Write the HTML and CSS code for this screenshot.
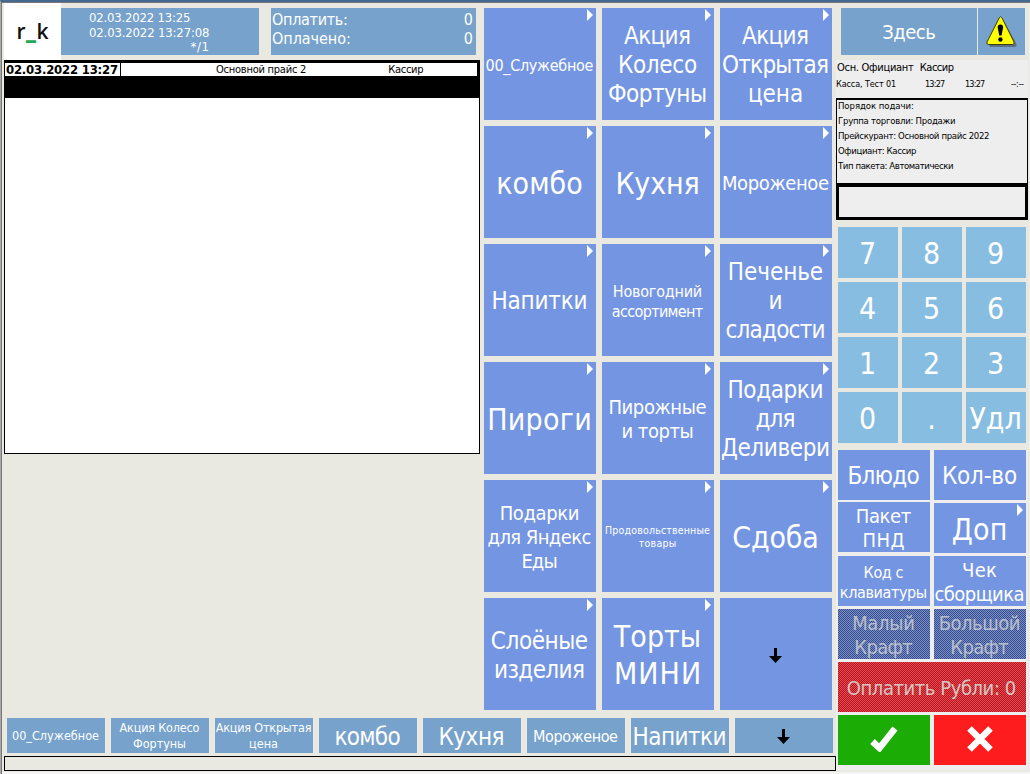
FILE: index.html
```html
<!DOCTYPE html>
<html lang="ru">
<head>
<meta charset="utf-8">
<title>r_k</title>
<link rel="stylesheet" href="styles.css">
</head>
<body>
<div class="window">
  <main class="main">
    <div class="top">
      <section class="order">
        <header class="order-head">
          <div class="logo"><span>r<i>_</i>k</span></div>
          <div class="panel dates">
            <span data-w="101">02.03.2022 13:25</span>
            <span data-w="120">02.03.2022 13:27:08</span>
            <span class="seat" data-w="18">*/1</span>
          </div>
          <div class="panel totals">
            <div><span data-w="75">Оплатить:</span><span>0</span></div>
            <div><span data-w="78">Оплачено:</span><span>0</span></div>
          </div>
        </header>
        <div class="receipt">
          <div class="receipt-row">
            <b><span data-w="112">02.03.2022 13:27</span></b>
            <span class="price" data-w="90">Основной прайс 2</span>
            <span class="cashier" data-w="35">Кассир</span>
          </div>
          <div class="receipt-selected"></div>
        </div>
      </section>
      <section class="categories">
        <button class="tile more s16"><span data-w="108">00_Служебное</span></button>
        <button class="tile more s24"><span data-w="66">Акция</span><span data-w="77">Колесо</span><span data-w="97">Фортуны</span></button>
        <button class="tile more s24"><span data-w="66">Акция</span><span data-w="105">Открытая</span><span data-w="53">цена</span></button>
        <button class="tile more s30"><span data-w="84">комбо</span></button>
        <button class="tile more s30"><span data-w="80">Кухня</span></button>
        <button class="tile more s20"><span data-w="106">Мороженое</span></button>
        <button class="tile more s24"><span data-w="93">Напитки</span></button>
        <button class="tile more s16"><span data-w="88">Новогодний</span><span data-w="91">ассортимент</span></button>
        <button class="tile more s24"><span data-w="93">Печенье</span><span>и</span><span data-w="98">сладости</span></button>
        <button class="tile more s30"><span data-w="101">Пироги</span></button>
        <button class="tile more s20"><span data-w="97">Пирожные</span><span data-w="70">и торты</span></button>
        <button class="tile more s24"><span data-w="93">Подарки</span><span data-w="38">для</span><span data-w="107">Деливери</span></button>
        <button class="tile more s20"><span data-w="78">Подарки</span><span data-w="103">для Яндекс</span><span data-w="34">Еды</span></button>
        <button class="tile more s11"><span data-w="105">Продовольственные</span><span data-w="37">товары</span></button>
        <button class="tile more s30"><span data-w="84">Сдоба</span></button>
        <button class="tile more s24 low"><span data-w="96">Слоёные</span><span data-w="89">изделия</span></button>
        <button class="tile more s30"><span data-w="86">Торты</span><span data-w="83">МИНИ</span></button>
        <button class="tile"><svg class="arrow" width="13" height="15" viewBox="0 0 13 15"><path d="M5 0h3v8h5L6.500 15 0 8h5z"/></svg></button>
      </section>
    </div>
    <nav class="quick">
      <button class="tile s13"><span data-w="87">00_Служебное</span></button>
      <button class="tile s13"><span data-w="80">Акция Колесо</span><span data-w="52">Фортуны</span></button>
      <button class="tile s13"><span data-w="95">Акция Открытая</span><span data-w="27">цена</span></button>
      <button class="tile s24"><span data-w="65">комбо</span></button>
      <button class="tile s24"><span data-w="63">Кухня</span></button>
      <button class="tile s16"><span data-w="84">Мороженое</span></button>
      <button class="tile s24"><span data-w="91">Напитки</span></button>
      <button class="tile"><svg class="arrow" width="13" height="15" viewBox="0 0 13 15"><path d="M5 0h3v8h5L6.500 15 0 8h5z"/></svg></button>
    </nav>
    <div class="status"></div>
  </main>
  <aside class="side">
    <div class="mode">
      <button class="panel place"><span data-w="52">Здесь</span></button>
      <button class="panel warn">
        <svg width="32" height="32" viewBox="0 0 32 32">
          <path d="M17 3.500 30.500 28Q31 31 28.500 31H5q-2 0-2-2z" fill="#5d6f84"/>
          <path d="M13.500 1.500q1-1.500 2.300 0L28 26q.7 2.500-1.700 2.500H2.500Q.3 28.500 1 26z" fill="#ff0" stroke="#3c3c10" stroke-width="1"/>
          <path d="M11.700 11.500q0-3 2.700-3t2.700 3l-1.500 8h-2.400z"/><circle cx="14.400" cy="23.500" r="2.200"/>
        </svg>
      </button>
    </div>
    <div class="body">
      <div class="staff"><span data-w="77">Осн. Официант</span><span data-w="34">Кассир</span></div>
      <div class="shift"><span data-w="60">Касса, Тест 01</span><span data-w="20">13:27</span><span data-w="20">13:27</span><span data-w="13">--:--</span></div>
      <div class="details">
        <span data-w="75">Порядок подачи:</span>
        <span data-w="117">Группа торговли: Продажи</span>
        <span data-w="151">Прейскурант: Основной прайс 2022</span>
        <span data-w="78">Официант: Кассир</span>
        <span data-w="116">Тип пакета: Автоматически</span>
      </div>
      <div class="entry"></div>
      <div class="keys">
        <button class="tile s30">7</button><button class="tile s30">8</button><button class="tile s30">9</button>
        <button class="tile s30">4</button><button class="tile s30">5</button><button class="tile s30">6</button>
        <button class="tile s30">1</button><button class="tile s30">2</button><button class="tile s30">3</button>
        <button class="tile s30">0</button><button class="tile s30">.</button><button class="tile s30"><span data-w="51">Удл</span></button>
      </div>
      <div class="actions">
        <button class="tile s24"><span data-w="70">Блюдо</span></button>
        <button class="tile s24"><span data-w="73">Кол-во</span></button>
        <button class="tile s20 pair"><span data-w="54">Пакет</span><span data-w="41">ПНД</span></button>
        <button class="tile more s30"><span data-w="53">Доп</span></button>
        <button class="tile s16"><span data-w="39">Код с</span><span data-w="86">клавиатуры</span></button>
        <button class="tile s20"><span data-w="34">Чек</span><span data-w="88">сборщика</span></button>
        <button class="tile s20 off"><span data-w="61">Малый</span><span data-w="57">Крафт</span></button>
        <button class="tile s20 off"><span data-w="80">Большой</span><span data-w="57">Крафт</span></button>
        <button class="tile s20 off pay"><span data-w="168">Оплатить Рубли: 0</span></button>
        <button class="tile ok"><svg width="28" height="26" viewBox="0 0 28 26"><path d="M2.500 15.500 9.500 22 25 2.500" fill="none" stroke="#fff" stroke-width="6.500"/></svg></button>
        <button class="tile cancel"><svg width="26" height="26" viewBox="0 0 26 26"><path d="M2.500 2.500l21 21m0-21l-21 21" stroke="#fff" stroke-width="6.500"/></svg></button>
      </div>
    </div>
  </aside>
</div>
<script src="fit.js"></script>
</body>
</html>
```
FILE: styles.css
```css
* { box-sizing: border-box; }
body {
  margin: 0;
  width: 1030px;
  height: 774px;
  overflow: hidden;
  background: #e9e9e1;
  font-family: "DejaVu Sans Condensed", "DejaVu Sans", sans-serif;
  font-stretch: condensed;
}
span { white-space: nowrap; }
.window {
  display: flex;
  height: 774px;
  padding: 0 2px 0 2px;
  border-top: 2px solid #44688f;
  border-left: 1px solid #aaa9a5;
  box-shadow: inset 1px 1px #77777b, inset 0 -2px #f4f4f4, inset -1px 0 #eeeeef;
}
.main { width: 833px; padding: 1px 0 0 1px; }
.top { display: flex; height: 715px; }
.order { width: 476px; }
.order-head { display: flex; height: 57px; }
.logo {
  display: flex;
  align-items: center;
  justify-content: center;
  width: 57px;
  background: #fff;
  color: #111;
  font: 600 21px/1 "Open Sans", "Noto Sans", sans-serif;
}
.logo i {
  display: inline-block;
  width: 11px;
  color: #24a854;
  font-style: normal;
  text-align: center;
  -webkit-text-stroke: 1.2px #24a854;
}
.panel { background: #76a2cb; color: #fff; height: 47px; margin-top: 5px; }
.dates { display: flex; flex-direction: column; align-items: flex-start; width: 198px; padding: 2px 50px 0 28px; font-size: 13px; line-height: 15px; }
.dates .seat { align-self: flex-end; line-height: 13px; }
.totals { width: 205px; margin-left: 12px; padding: 2px 3px 0 1px; font-size: 16px; line-height: 19px; }
.totals div { display: flex; justify-content: space-between; }
.receipt { height: 394px; border: 1px solid #000; background: #fff; }
.receipt-row { display: flex; height: 16px; align-items: center; border-top: 2px solid #000; border-right: 2px solid #000; font-size: 11px; line-height: 14px; }
.receipt-row b { width: 116px; height: 14px; padding-left: 1px; border-right: 1px solid #000; font-size: 13px; }
.price { width: 90px; margin-left: 95px; }
.cashier { margin-left: 82px; }
.receipt-selected { height: 22px; margin-top: -1px; background: #000; }
.categories { display: grid; grid-template-columns: repeat(3, 112px); grid-auto-rows: 112px; gap: 6px; padding: 5px 0 0 4px; }
.tile {
  position: relative;
  display: flex;
  flex-direction: column;
  align-items: center;
  justify-content: center;
  min-width: 0;
  padding: 2px 1px 0 0;
  border: 0;
  background: #7495e2;
  color: #fff;
  font-family: inherit;
  font-stretch: inherit;
}
.more::after {
  content: "";
  position: absolute;
  top: 1px;
  right: 3px;
  border: solid transparent;
  border-width: 6px 0 6px 6px;
  border-left-color: #fff;
}
.s11 { padding-top: 1px; font-size: 10.5px; line-height: 13px; }
.s13 { padding-top: 0; font-size: 12.5px; line-height: 16px; }
.s16 { padding-top: 3px; font-size: 16px; line-height: 20px; }
.s20 { font-size: 20px; line-height: 24px; }
.s24 { font-size: 24px; line-height: 29px; }
.s30 { font-size: 30px; line-height: 37px; }
.low { padding-top: 4px; }
.quick { display: grid; grid-template-columns: repeat(8, 98px); grid-auto-rows: 35px; gap: 6px; padding-left: 3px; }
.quick .tile { background: #76a2cb; }
.quick .s24 { padding-top: 4px; }
.status { width: 832px; height: 15px; margin-top: 3px; border: 1px solid #000; }
.side { width: 192px; }
.mode { display: flex; gap: 1px; height: 58px; padding: 2px 0 0 5px; }
.mode button { border: 0; padding: 0; font-family: inherit; font-stretch: inherit; font-size: 20px; }
.mode .panel { margin-top: 4px; }
.place { width: 136px; }
.warn { display: flex; align-items: center; justify-content: center; width: 47px; }
.body { height: 710px; background: #eee; }
.staff { display: flex; gap: 6px; height: 15px; padding-left: 1px; font-size: 11px; line-height: 15px; }
.shift { display: grid; grid-template-columns: 89px 40px 46px 15px; height: 23px; font-size: 9px; line-height: 18px; }
.details { display: flex; flex-direction: column; align-items: flex-start; height: 87px; border: 1px solid #000; border-top-width: 2px; border-bottom-width: 2px; padding-left: 1px; font-size: 9.5px; line-height: 15px; }
.details span { margin-top: -2px; margin-bottom: 2px; }
.entry { height: 35px; border: 3px solid #000; border-top-width: 2px; }
.keys { display: grid; grid-template-columns: repeat(3, 60px); grid-auto-rows: 51px; gap: 4px; height: 230px; padding: 7px 0 0 2px; background: #e9e9e1; }
.keys .tile { padding-top: 2px; background: #86bde1; }
.actions { display: grid; grid-template-columns: 92px 92px; grid-auto-rows: 50px; gap: 3px 4px; padding-left: 2px; }
.actions .pair { padding-top: 2px; margin: -1px 0 1px; }
.actions .ok, .actions .cancel { padding: 0 1px 2px 0; }
.off { background: repeating-conic-gradient(#354b8b 0 25%, #7b8fc8 0 50%) 0 0 / 2px 2px; color: #b8bfcc; }
.actions .pay { grid-column: span 2; background: repeating-conic-gradient(#ae1420 0 25%, #ee4a50 0 50%) 0 0 / 2px 2px; color: #d5c6c0; }
.actions .ok { background: #1bad05; }
.actions .cancel { background: #fe1c1e; }
```
FILE: fit.js
```javascript
// Adjusts tracking so every caption occupies its allotted width.
const ctx = document.createElement("canvas").getContext("2d");
document.querySelectorAll("[data-w]").forEach((el) => {
  const style = getComputedStyle(el);
  ctx.font = `${style.fontWeight} ${style.fontSize} ${style.fontFamily}`;
  const text = el.textContent;
  const m = ctx.measureText(text);
  const ink = m.actualBoundingBoxRight + m.actualBoundingBoxLeft;
  const spacing = (Number(el.dataset.w) - ink) / (text.length - 1);
  el.style.letterSpacing = `${spacing}px`;
  el.style.marginRight = `${-spacing}px`;
});
```
